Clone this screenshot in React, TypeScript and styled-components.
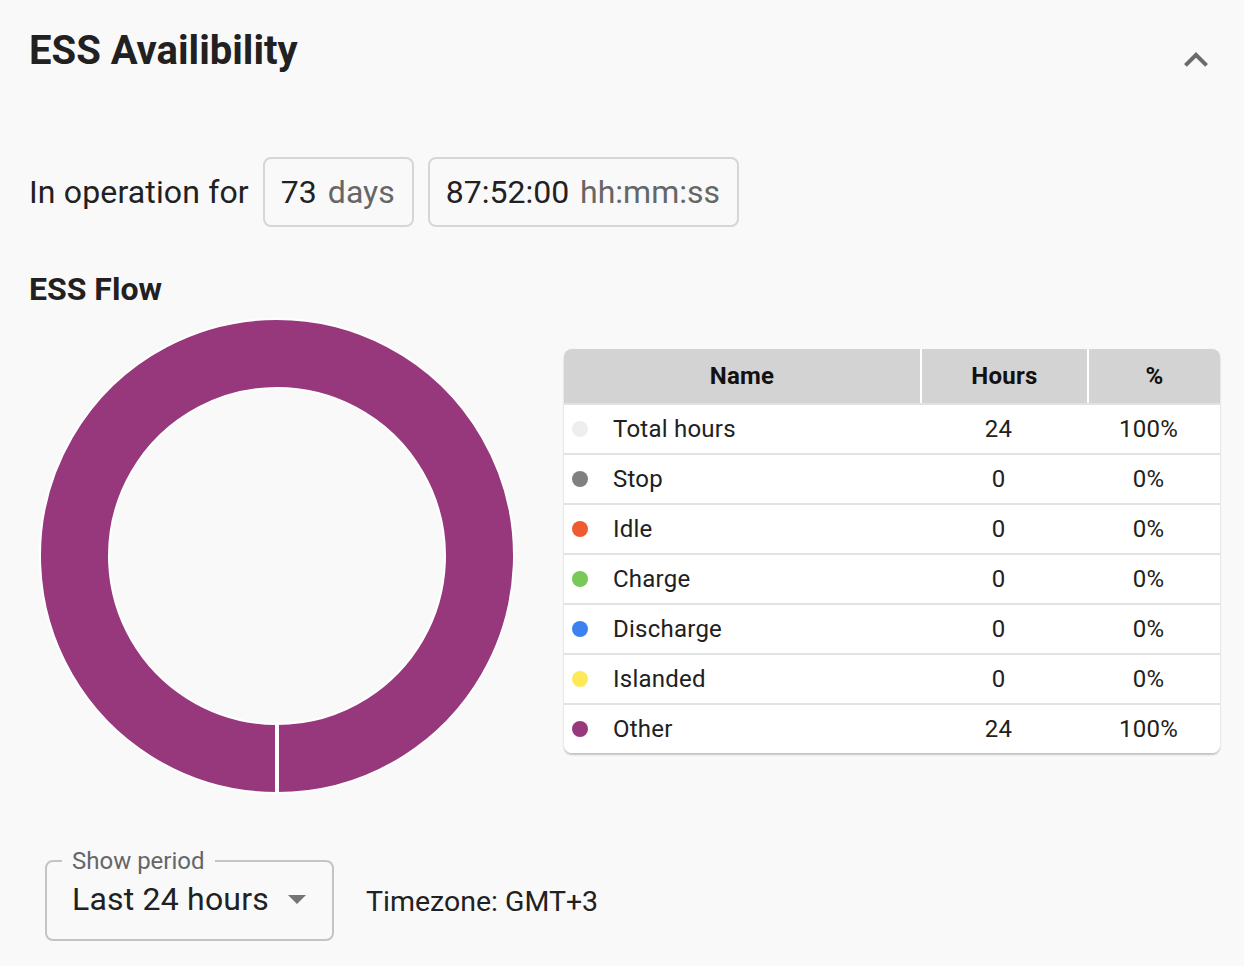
import React from "react";
import styled, { createGlobalStyle } from "styled-components";

const Global = createGlobalStyle`
  html, body { margin: 0; padding: 0; background: #f9f9f9; }
  body { font-family: Roboto, "Liberation Sans", sans-serif; color: #212121; }
`;

const Page = styled.div`
  width: 1244px;
  height: 966px;
  box-sizing: border-box;
  padding: 27px 24px 0 29px;
  display: flex;
  flex-direction: column;
`;

const Header = styled.div`
  display: flex;
  align-items: flex-start;
  justify-content: space-between;
  height: 48px;
`;

const Title = styled.h1`
  margin: 0;
  font-size: 40px;
  line-height: 48px;
  font-weight: 700;
  color: #212121;
`;

const Chevron = styled.button`
  border: 0;
  background: none;
  padding: 0;
  margin-top: 9px;
  width: 48px;
  height: 48px;
  display: flex;
  align-items: center;
  justify-content: center;
`;

const OperationRow = styled.div`
  display: flex;
  align-items: center;
  gap: 14px;
  margin-top: 82px;
  font-size: 32px;
`;

const Label = styled.span`
  font-size: 32px;
  line-height: 40px;
  letter-spacing: 0.15px;
`;

const ValueBox = styled.div`
  height: 70px;
  box-sizing: border-box;
  border: 2px solid #d6d6d6;
  border-radius: 8px;
  display: flex;
  align-items: center;
  padding: 0 17px 0 16px;
  gap: 11px;
  font-size: 32px;
`;

const Unit = styled.span`
  color: #666;
`;

const Subtitle = styled.h2`
  margin: 43px 0 0;
  font-size: 32px;
  line-height: 38px;
  font-weight: 700;
`;

const ChartRow = styled.div`
  display: flex;
  align-items: flex-start;
  margin-top: 8px;
`;

const Donut = styled.svg`
  display: block;
  margin-left: 8px;
  flex: none;
`;

const Table = styled.div`
  margin-left: 47px;
  margin-top: 33px;
  width: 656px;
  background: #fff;
  border-radius: 8px;
  box-shadow: 0 2px 2px rgba(0, 0, 0, 0.22), 0 0 1px rgba(0, 0, 0, 0.1);
  overflow: hidden;
`;

const Row = styled.div<{ $head?: boolean }>`
  display: grid;
  grid-template-columns: 356px 167px 133px;
  height: ${(p) => (p.$head ? "54px" : "50px")};
  background: ${(p) => (p.$head ? "#d3d3d3" : "#fff")};
  border-top: ${(p) => (p.$head ? "0" : "2px solid #e2e2e2")};
  box-sizing: border-box;
  align-items: stretch;
  font-size: 24px;
  letter-spacing: 0.01em;
`;

const HeadCell = styled.div<{ $sep?: boolean }>`
  display: flex;
  align-items: center;
  justify-content: center;
  font-weight: 700;
  color: #111;
  border-left: ${(p) => (p.$sep ? "2px solid #fff" : "0")};
`;

const NameCell = styled.div`
  display: flex;
  align-items: center;
  padding-left: 8px;
  gap: 25px;
`;

const Dot = styled.span<{ $c: string }>`
  width: 16px;
  height: 16px;
  border-radius: 50%;
  background: ${(p) => p.$c};
  flex: none;
`;

const NumCell = styled.div<{ $shift?: number }>`
  display: flex;
  align-items: center;
  justify-content: center;
  padding-right: ${(p) => p.$shift ?? 0}px;
`;

const Footer = styled.div`
  display: flex;
  align-items: center;
  gap: 32px;
  margin-top: 53px;
  margin-left: 16px;
`;

const Field = styled.fieldset`
  margin: 0;
  box-sizing: border-box;
  width: 289px;
  height: 92px;
  border: 2px solid #c4c4c4;
  border-radius: 8px;
  padding: 0 26px 0 27px;
  display: flex;
  align-items: center;
  justify-content: space-between;
`;

const Legend = styled.legend`
  font-size: 24px;
  color: #666;
  padding: 0 10px;
  margin-left: -12px;
  line-height: 24px;
`;

const SelectValue = styled.span`
  font-size: 32px;
  line-height: 40px;
  margin-top: -14px;
  margin-left: -2px;
  letter-spacing: 0.2px;
`;

const Caret = styled.span`
  width: 0;
  height: 0;
  border-left: 9px solid transparent;
  border-right: 9px solid transparent;
  border-top: 9px solid #757575;
  margin-top: -14px;
`;

const Timezone = styled.span`
  font-size: 28.5px;
  margin-top: 12px;
`;

const rows = [
  { name: "Total hours", color: "#eeeeee", hours: "24", pct: "100%" },
  { name: "Stop", color: "#808080", hours: "0", pct: "0%" },
  { name: "Idle", color: "#ef5a30", hours: "0", pct: "0%" },
  { name: "Charge", color: "#78c85a", hours: "0", pct: "0%" },
  { name: "Discharge", color: "#3b82f0", hours: "0", pct: "0%" },
  { name: "Islanded", color: "#fde95a", hours: "0", pct: "0%" },
  { name: "Other", color: "#98397c", hours: "24", pct: "100%" },
];

function Ring() {
  const cx = 240, cy = 240, R = 237, r = 168;
  const d = `M ${cx} ${cy - R} A ${R} ${R} 0 1 1 ${cx - 0.01} ${cy - R} Z M ${cx} ${cy - r} A ${r} ${r} 0 1 0 ${cx + 0.01} ${cy - r} Z`;
  return (
    <Donut width="480" height="480" viewBox="0 0 480 480">
      <path d={d} fill="#98387c" fillRule="evenodd" stroke="#fff" strokeWidth="2" />
      <rect x={cx - 2} y={cy + r - 2} width="4" height={R - r + 4} fill="#fff" />
    </Donut>
  );
}

export default function App() {
  return (
    <>
      <Global />
      <Page>
        <Header>
          <Title>ESS Availibility</Title>
          <Chevron aria-label="collapse">
            <svg width="48" height="48" viewBox="0 0 24 24">
              <path d="M12 8l-6 6 1.41 1.41L12 10.83l4.59 4.58L18 14z" fill="#6b6b6b" />
            </svg>
          </Chevron>
        </Header>
        <OperationRow>
          <Label>In operation for</Label>
          <ValueBox>
            <span>73</span>
            <Unit>days</Unit>
          </ValueBox>
          <ValueBox>
            <span>87:52:00</span>
            <Unit>hh:mm:ss</Unit>
          </ValueBox>
        </OperationRow>
        <Subtitle>ESS Flow</Subtitle>
        <ChartRow>
          <Ring />
          <Table>
            <Row $head>
              <HeadCell>Name</HeadCell>
              <HeadCell $sep>Hours</HeadCell>
              <HeadCell $sep>%</HeadCell>
            </Row>
            {rows.map((r) => (
              <Row key={r.name}>
                <NameCell>
                  <Dot $c={r.color} />
                  <span>{r.name}</span>
                </NameCell>
                <NumCell $shift={10}>{r.hours}</NumCell>
                <NumCell $shift={10}>{r.pct}</NumCell>
              </Row>
            ))}
          </Table>
        </ChartRow>
        <Footer>
          <Field>
            <Legend>Show period</Legend>
            <SelectValue>Last 24 hours</SelectValue>
            <Caret />
          </Field>
          <Timezone>Timezone: GMT+3</Timezone>
        </Footer>
      </Page>
    </>
  );
}
